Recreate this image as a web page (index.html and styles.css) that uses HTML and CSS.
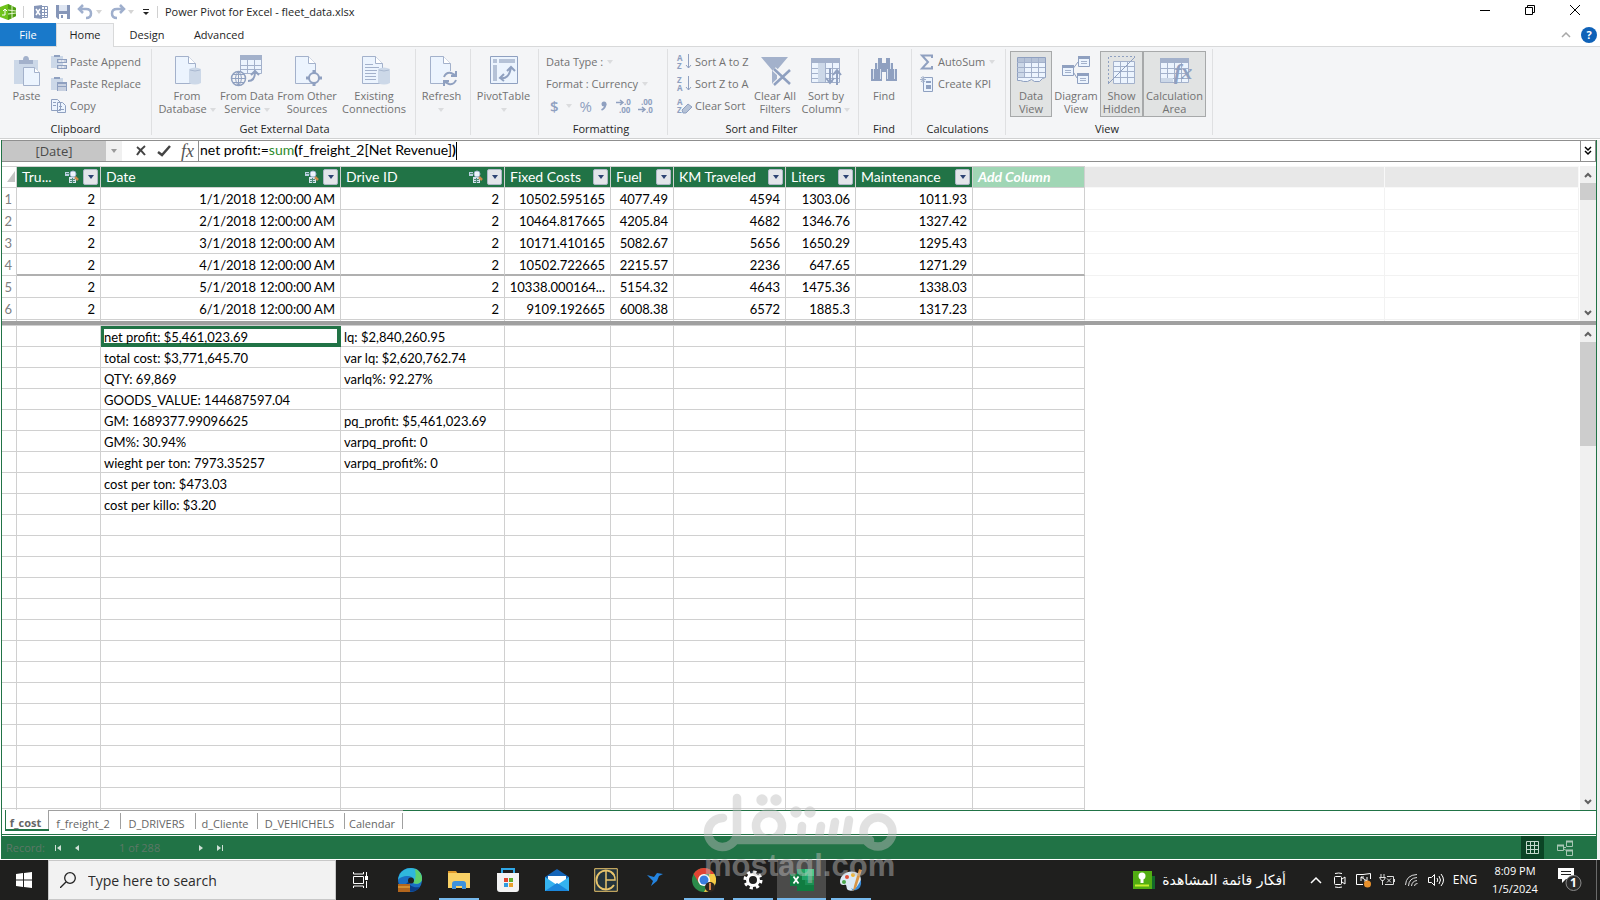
FILE: index.html
```html
<!DOCTYPE html>
<html lang="en">
<head>
<meta charset="utf-8">
<title>Power Pivot for Excel - fleet_data.xlsx</title>
<link rel="stylesheet" href="styles.css">
</head>
<body>
<svg class="defs" aria-hidden="true">
  <symbol id="down" viewBox="0 0 6 4"><path d="M0 0h6L3 4z" fill="currentColor"/></symbol>
  <symbol id="chev-up" viewBox="0 0 8 6"><path d="M1 5l3-3 3 3" fill="none" stroke="#606060" stroke-width="2"/></symbol>
  <symbol id="chev-down" viewBox="0 0 8 6"><path d="M1 1l3 3 3-3" fill="none" stroke="#606060" stroke-width="2"/></symbol>
  <symbol id="rel" viewBox="0 0 14 14"><path d="M0 2h4v4H0z" fill="#b9cfe0"/><path d="M4 7h7v6H4z" fill="#d5e2ee"/><path d="M5 9.500h5M5 11.500h5M7.500 8v5M1 3.500h3" stroke="#4f8a78"/><path d="M10 7l3 3" stroke="#c98a4b" stroke-width="2.500"/><circle cx="8" cy="4" r="3" fill="#eef4fb" stroke="#9fb3cc"/></symbol>
  <symbol id="page" viewBox="0 0 32 32"><path d="M4.500 1.500h13l7 7v20h-20z" fill="#ecf4fe" stroke="#a3b1cb"/><path d="M17.500 1.500v7h7" fill="#fff" stroke="#a3b1cb"/></symbol>
  <symbol id="table" viewBox="0 0 30 26"><path d="M.5.5h28v24H.5z" fill="#ecf4fe" stroke="#a3b1cb"/><path d="M0 0h29v5H0z" fill="#a3b1cb"/><path d="M0 10.500h29M0 15.500h29M0 20.500h29M7.500 5v20M14.500 5v20M21.500 5v20" stroke="#a3b1cb"/></symbol>
  <symbol id="cyl" viewBox="0 0 12 18"><path d="M0 2q6-3 12 0v14q-6 3-12 0z" fill="#ccd8e8"/><path d="M1 3q5 2 10 0" fill="none" stroke="#a9b8d0"/></symbol>
</svg>
<div class="app">
  <header class="titlebar">
    <svg class="logo" width="17" height="16" viewBox="0 0 17 16"><path d="M0 3l8-3 8 4v8l-8 4-8-3z" fill="#6fc31c"/><path d="M8 0l8 4v8l-8 4z" fill="#4f9f12"/><path d="M12 2v12M8 6l8 1M8 10l8-1" stroke="#e6f6cf"/><path d="M2 11h3V5M3 7l2-2 2 2" fill="none" stroke="#fff"/></svg>
    <i class="tsep"></i>
    <button class="qat" aria-label="Excel"><svg width="16" height="16" viewBox="0 0 16 16"><path d="M8.500 2.500h6v11h-6z" fill="#fff" stroke="#8696b8"/><path d="M9 5.500h5M9 8.500h5M9 11.500h5M11.500 3v10" stroke="#8696b8"/><path d="M1 2l8-1v14l-8-1z" fill="#8696b8"/><path d="M3 5l4 6M7 5l-4 6" stroke="#fff" stroke-width="1.500"/></svg></button>
    <button class="qat" aria-label="Save"><svg width="16" height="16" viewBox="0 0 16 16"><path d="M1 1h14v14H3l-2-2z" fill="#8696b8"/><path d="M4 1h8v6H4z" fill="#dfe6f2"/><path d="M4 10h8v5H4z" fill="#fff"/><path d="M6 11h2v3H6z" fill="#8696b8"/></svg></button>
    <button class="qat undo" aria-label="Undo"><svg width="16" height="16" viewBox="0 0 16 16"><path d="M6 1L2 5l4 4M2 5h7q5 0 5 4.500T9 14" fill="none" stroke="#9fafcd" stroke-width="2.500"/></svg></button>
    <svg class="tarrow" width="6" height="4"><use href="#down"/></svg>
    <button class="qat redo" aria-label="Redo"><svg width="16" height="16" viewBox="0 0 16 16"><path d="M10 1l4 4-4 4M14 5H7q-5 0-5 4.500T7 14" fill="none" stroke="#9fafcd" stroke-width="2.500"/></svg></button>
    <svg class="tarrow" width="6" height="4"><use href="#down"/></svg>
    <button class="qat custom" aria-label="Customize toolbar"><svg width="8" height="8" viewBox="0 0 8 8"><path d="M1 1.500h6" stroke="#222"/><path d="M1 4h6L4 7z" fill="#222"/></svg></button>
    <i class="tsep"></i>
    <h1>Power Pivot for Excel - fleet_data.xlsx</h1>
    <div class="winbtns">
      <button aria-label="Minimize"><svg width="12" height="12"><path d="M1 6.500h10" stroke="#000"/></svg></button>
      <button aria-label="Restore"><svg width="12" height="12"><path d="M1.500 3.500h7v7h-7zM3.500 3V1.500h7v7H9" fill="none" stroke="#000"/></svg></button>
      <button aria-label="Close"><svg width="12" height="12"><path d="M1 1l10 10M11 1L1 11" stroke="#000"/></svg></button>
    </div>
  </header>
  <nav class="tabs">
    <button class="file">File</button><button class="active">Home</button><button class="design">Design</button><button class="advanced">Advanced</button>
    <span class="help"><button aria-label="Collapse ribbon"><svg width="10" height="6"><path d="M1 5l4-4 4 4" fill="none" stroke="#a8a8a8" stroke-width="1.500"/></svg></button><button class="q" aria-label="Help">?</button></span>
  </nav>
  <section class="ribbon">
    <div class="group g-clip"><div class="body">
      <button class="big w-paste"><svg width="32" height="32" viewBox="0 0 32 32"><path d="M3 5h24v24H3z" fill="#ccd8e8"/><path d="M8 5h4q0-4 3-4t3 4h4v4H8z" fill="#a3b1cb"/><path d="M12.500 12.500h11l5 5v13h-16z" fill="#ecf4fe" stroke="#a3b1cb"/><path d="M23.500 12.500v5h5" fill="#fff" stroke="#a3b1cb"/></svg><span>Paste</span></button>
      <div class="col">
        <button class="small"><svg width="16" height="16" viewBox="0 0 16 16"><path d="M0 2h12v12H0z" fill="#ccd8e8"/><path d="M3 3V1h6v2zM6 5h10v4H6zM6 11h10v4H6z" fill="#8fa0c0"/><path d="M7 7h8M7 13h8M9 6v2M12 6v2M9 12v2M12 12v2" stroke="#fff"/></svg>Paste Append</button>
        <button class="small"><svg width="16" height="16" viewBox="0 0 16 16"><path d="M0 2h12v12H0z" fill="#ccd8e8"/><path d="M3 3V1h6v2zM6 6h10v9H6z" fill="#8fa0c0"/><path d="M7 9h8M7 12h8M7 14h8" stroke="#fff"/></svg>Paste Replace</button>
        <button class="small"><svg width="16" height="16" viewBox="0 0 16 16"><path d="M.5 1.500h6l3 3v8h-9zM6.500 4.500h5l3 3v7h-8z" fill="#ecf4fe" stroke="#8fa0c0"/><path d="M2 4.500h3M2 7.500h3M8 8.500h3M8 11.500h5" stroke="#8fa0c0"/></svg>Copy</button>
      </div></div><h2>Clipboard</h2></div>
    <div class="group g-ext"><div class="body">
      <button class="big w-db"><svg width="32" height="32"><use href="#page"/><use href="#cyl" x="18" y="12" width="12" height="18"/></svg><span>From<br>Database <svg class="arr" width="6" height="4"><use href="#down"/></svg></span></button>
      <button class="big w-svc"><svg width="32" height="32" viewBox="0 0 32 32"><path d="M9.500 1.500h21v17h-21z" fill="#ecf4fe" stroke="#a3b1cb"/><path d="M9 0h22v5H9z" fill="#a3b1cb"/><path d="M9 10.500h22M9 14.500h22M16.500 5v13M23.500 5v13" stroke="#a3b1cb"/><circle cx="7.500" cy="23.500" r="7" fill="#f4f5f7" stroke="#8fa0c0" stroke-width="1.500"/><path d="M.5 23.500h14M2 19.500h11M2 27.500h11M7.500 16v15M7.500 16q-6 7 0 15M7.500 16q6 7 0 15" fill="none" stroke="#8fa0c0"/><path d="M17 26q7 0 7-9M20 20l4-4 4 4" fill="none" stroke="#8fa0c0" stroke-width="2"/></svg><span>From Data<br>Service <svg class="arr" width="6" height="4"><use href="#down"/></svg></span></button>
      <button class="big w-oth"><svg width="32" height="32"><use href="#page"/><circle cx="23" cy="23" r="5" fill="#f4f5f7" stroke="#8fa0c0" stroke-width="2"/><path d="M23 15v4M23 27v4M15 23h4M27 23h4" stroke="#8fa0c0" stroke-width="3"/></svg><span>From Other<br>Sources</span></button>
      <button class="big w-con"><svg width="32" height="32"><use href="#page"/><path d="M7 9.500h8M7 12.500h14M7 15.500h12M7 18.500h11M7 21.500h11M7 24.500h11" stroke="#a3b1cb"/><use href="#cyl" x="20" y="12" width="12" height="18"/></svg><span>Existing<br>Connections</span></button>
      </div><h2>Get External Data</h2></div>
    <div class="group g-ref"><div class="body">
      <button class="big"><svg width="32" height="32"><use href="#page"/><circle cx="24" cy="24" r="8" fill="#f4f5f7"/><path d="M18 22q2-5 7-4l4 2M30 16v5h-5M30 25q-2 5-7 4l-4-2M18 31v-5h5" fill="none" stroke="#8fa0c0" stroke-width="2"/></svg><span>Refresh<br><svg class="arr" width="6" height="4"><use href="#down"/></svg></span></button>
      </div><h2></h2></div>
    <div class="group g-piv"><div class="body">
      <button class="big"><svg width="32" height="32" viewBox="0 0 32 32"><path d="M2.500 1.500h27v27h-27z" fill="#ecf4fe" stroke="#8fa0c0"/><path d="M5 4h4v4H5zM11 4h16v4H11zM5 10h4v16H5z" fill="#b5c2d7"/><path d="M12 23q9 2 11-11M19 16l4-4 4 4M16 19l-4 4 4 3" fill="none" stroke="#8fa0c0" stroke-width="2"/></svg><span>PivotTable<br><svg class="arr" width="6" height="4"><use href="#down"/></svg></span></button>
      </div><h2></h2></div>
    <div class="group g-fmt"><div class="body"><div class="col">
        <button class="small">Data Type : <svg class="arr" width="6" height="4"><use href="#down"/></svg></button>
        <button class="small">Format : Currency <svg class="arr" width="6" height="4"><use href="#down"/></svg></button>
        <div class="fmt">
          <button aria-label="Currency"><b class="cur">$</b><svg class="arr" width="6" height="4"><use href="#down"/></svg></button>
          <button><b>%</b></button>
          <button aria-label="Comma style"><svg width="8" height="12" viewBox="0 0 8 12"><circle cx="4" cy="4" r="2.500" fill="#8fa0c0"/><path d="M5.500 4q0 4-4 6" fill="none" stroke="#8fa0c0" stroke-width="1.800"/></svg></button>
          <button class="dec" aria-label="Increase decimal"><svg width="18" height="18" viewBox="0 0 18 18"><path d="M0 5.500h6M4 3l3 2.500L4 8" fill="none" stroke="#8fa0c0" stroke-width="1.500"/><text x="8" y="8">.0</text><text x="3" y="16">.00</text></svg></button>
          <button class="dec" aria-label="Decrease decimal"><svg width="18" height="18" viewBox="0 0 18 18"><path d="M0 12.500h6M4 10l3 2.500L4 15" fill="none" stroke="#8fa0c0" stroke-width="1.500"/><text x="3" y="8">.00</text><text x="8" y="16">.0</text></svg></button>
        </div></div></div><h2>Formatting</h2></div>
    <div class="group g-sort"><div class="body">
      <div class="col">
        <button class="small"><svg width="16" height="20" viewBox="0 0 16 20"><text x="0" y="9">A</text><text x="0" y="17">Z</text><path d="M11.500 2v14M9 13l2.500 3 2.500-3" fill="none" stroke="#8fa0c0"/></svg>Sort A to Z</button>
        <button class="small"><svg width="16" height="20" viewBox="0 0 16 20"><text x="0" y="9">Z</text><text x="0" y="17">A</text><path d="M11.500 2v14M9 13l2.500 3 2.500-3" fill="none" stroke="#8fa0c0"/></svg>Sort Z to A</button>
        <button class="small"><svg width="16" height="20" viewBox="0 0 16 20"><text x="0" y="9">A</text><text x="0" y="17">Z</text><path d="M5 14l6-6 4 3-6 6H6z" fill="#b5c2d7" stroke="#8fa0c0"/></svg>Clear Sort</button>
      </div>
      <button class="big w-clr"><svg width="32" height="32" viewBox="0 0 32 32"><path d="M2 2h27L18 15v10l-5 4V15z" fill="#a3b1cb"/><path d="M15 14l16 15M31 15L15 30" stroke="#f4f5f7" stroke-width="5"/><path d="M15 14l16 15M31 15L15 30" stroke="#8fa0c0" stroke-width="2.500"/></svg><span>Clear All<br>Filters</span></button>
      <button class="big w-sby"><svg width="32" height="32" viewBox="0 0 32 32"><use href="#table" x="1" y="3" width="30" height="26"/><path d="M8 8h7v19H8z" fill="#ccd8e8"/><path d="M20 13v15M16 23l4 5 4-5M27 30V15M23 20l4-5 4 5" fill="none" stroke="#8fa0c0" stroke-width="2"/></svg><span>Sort by<br>Column <svg class="arr" width="6" height="4"><use href="#down"/></svg></span></button>
      </div><h2>Sort and Filter</h2></div>
    <div class="group g-find"><div class="body">
      <button class="big"><svg width="32" height="32" viewBox="0 0 32 32"><path d="M10 3h4v5h4V3h4v5h3v6h4v12H18v-9h-4v9H3V14h4V8h3z" fill="#8fa0c0"/><path d="M5.500 14v10M26.500 14v10M9.500 8v6M22.500 8v6M12.500 14v10M19.500 14v10" stroke="#d9e2ef"/></svg><span>Find</span></button>
      </div><h2>Find</h2></div>
    <div class="group g-calc"><div class="body"><div class="col">
        <button class="small"><svg width="14" height="16" viewBox="0 0 14 16"><path d="M12 4V1.500H2L8 8l-6 6.500h10V12" fill="none" stroke="#8fa0c0" stroke-width="2"/></svg>AutoSum <svg class="arr" width="6" height="4"><use href="#down"/></svg></button>
        <button class="small"><svg width="14" height="16" viewBox="0 0 14 16"><path d="M3.500 1.500h9v14h-9z" fill="#ecf4fe" stroke="#8fa0c0"/><path d="M6 5h5v2H6zM6 9h5v4H6z" fill="#8fa0c0"/><path d="M3 0v7M0 3.500h6M1 1l4 5M5 1L1 6" stroke="#a3b1cb"/></svg>Create KPI</button>
      </div></div><h2>Calculations</h2></div>
    <div class="group g-view"><div class="body">
      <button class="big on w-data"><svg width="32" height="32" viewBox="0 0 32 32"><path d="M2.500 2.500h28v20l-3 1-3 3h-5l-3-2-4 2h-4l-3-1h-3z" fill="#ecf4fe" stroke="#8fa0c0"/><path d="M3 3h27v4H3z" fill="#b5c2d7"/><path d="M3 7h6v15H3z" fill="#ccd8e8"/><path d="M2 7.500h28M2 12.500h28M2 17.500h28M2 22.500h28M9.500 3v20M16.500 3v20M23.500 3v20" stroke="#a3b1cb"/></svg><span>Data<br>View</span></button>
      <button class="big w-dia"><svg width="32" height="32" viewBox="0 0 32 32"><path d="M12 15l6-8M12 15l5 8" stroke="#8fa0c0"/><path d="M18.500 1.500h11v10h-11zM2.500 10.500h11v10h-11zM17.500 18.500h11v10h-11z" fill="#ecf4fe" stroke="#8fa0c0"/><path d="M18 1h12v3H18zM2 10h12v3H2zM17 18h12v3H17z" fill="#8fa0c0"/><path d="M21 6.500h6M21 8.500h6M5 15.500h6M5 17.500h6M20 23.500h6M20 25.500h6" stroke="#a3b1cb"/></svg><span>Diagram<br>View</span></button>
      <button class="big on w-show"><svg width="32" height="32" viewBox="0 0 32 32"><path d="M7.500 6.500h21v22h-21z" fill="#ecf4fe" stroke="#a3b1cb"/><path d="M7 11.500h21M7 16.500h21M7 22.500h21M14.500 6v22M21.500 6v22" stroke="#a3b1cb"/><path d="M2.500 28V1.500H29" fill="none" stroke="#8fa0c0" stroke-dasharray="2 2"/><path d="M2 29L29 2" stroke="#8fa0c0"/></svg><span>Show<br>Hidden</span></button>
      <button class="big on w-area"><svg width="32" height="32"><use href="#table" x="1" y="3" width="30" height="26"/><path d="M2 23h12v4H2z" fill="#ccd8e8"/><text class="fxi" x="15" y="24">fx</text></svg><span>Calculation<br>Area</span></button>
      </div><h2>View</h2></div>
  </section>
  <main class="frame">
    <div class="formula">
      <select aria-label="Name box"><option>[Date]</option></select>
      <span class="drop"><svg width="6" height="4"><use href="#down"/></svg></span>
      <div class="fbtns">
        <button aria-label="Cancel"><svg width="12" height="12"><path d="M2 2q4 3 8 8M10 1Q5 5 2 10" fill="none" stroke="#444" stroke-width="2"/></svg></button>
        <button aria-label="Enter"><svg width="14" height="12"><path d="M1 7l4 3 8-9" fill="none" stroke="#444" stroke-width="2.500"/></svg></button>
        <button class="fx" aria-label="Insert function">fx</button>
      </div>
      <div class="finput" role="textbox" contenteditable="true" spellcheck="false" aria-label="Formula">net profit:=<span class="fn">sum</span><b>(</b>f_freight_2[Net Revenue]<b>)</b><i class="caret"></i></div>
      <button class="expand" aria-label="Expand formula bar"><svg width="8" height="10"><path d="M1 1l3 3 3-3M1 5l3 3 3-3" fill="none" stroke="#000" stroke-width="1.500"/></svg></button>
    </div>
    <div class="pane data">
      <div class="view">
      <table>
        <colgroup><col class="c0"><col class="c1"><col class="c2"><col class="c3"><col class="c4"><col class="c5"><col class="c6"><col class="c7"><col class="c8"><col class="c9"><col class="c10"><col></colgroup>
        <thead><tr>
          <th class="corner"><svg width="9" height="12"><path d="M8 0v11H0z" fill="#c4c4c4"/></svg></th>
          <th><div><span>Tru...</span><svg width="14" height="14"><use href="#rel"/></svg><button aria-label="Filter"><svg width="6" height="4"><use href="#down"/></svg></button></div></th>
          <th><div><span>Date</span><svg width="14" height="14"><use href="#rel"/></svg><button aria-label="Filter"><svg width="6" height="4"><use href="#down"/></svg></button></div></th>
          <th><div><span>Drive ID</span><svg width="14" height="14"><use href="#rel"/></svg><button aria-label="Filter"><svg width="6" height="4"><use href="#down"/></svg></button></div></th>
          <th><div><span>Fixed Costs</span><button aria-label="Filter"><svg width="6" height="4"><use href="#down"/></svg></button></div></th>
          <th><div><span>Fuel</span><button aria-label="Filter"><svg width="6" height="4"><use href="#down"/></svg></button></div></th>
          <th><div><span>KM Traveled</span><button aria-label="Filter"><svg width="6" height="4"><use href="#down"/></svg></button></div></th>
          <th><div><span>Liters</span><button aria-label="Filter"><svg width="6" height="4"><use href="#down"/></svg></button></div></th>
          <th><div><span>Maintenance</span><button aria-label="Filter"><svg width="6" height="4"><use href="#down"/></svg></button></div></th>
          <th class="add"><div><span>Add Column</span></div></th>
          <th class="fill"></th><th class="fill"></th>
        </tr></thead>
        <tbody>
          <tr><td class="n">1<td>2<td>1/1/2018 12:00:00 AM<td>2<td>10502.595165<td>4077.49<td>4594<td>1303.06<td>1011.93<td><td class="f"><td class="f"></tr>
          <tr><td class="n">2<td>2<td>2/1/2018 12:00:00 AM<td>2<td>10464.817665<td>4205.84<td>4682<td>1346.76<td>1327.42<td><td class="f"><td class="f"></tr>
          <tr><td class="n">3<td>2<td>3/1/2018 12:00:00 AM<td>2<td>10171.410165<td>5082.67<td>5656<td>1650.29<td>1295.43<td><td class="f"><td class="f"></tr>
          <tr class="mark"><td class="n">4<td>2<td>4/1/2018 12:00:00 AM<td>2<td>10502.722665<td>2215.57<td>2236<td>647.65<td>1271.29<td><td class="f"><td class="f"></tr>
          <tr><td class="n">5<td>2<td>5/1/2018 12:00:00 AM<td>2<td>10338.000164...<td>5154.32<td>4643<td>1475.36<td>1338.03<td><td class="f"><td class="f"></tr>
          <tr><td class="n">6<td>2<td>6/1/2018 12:00:00 AM<td>2<td>9109.192665<td>6008.38<td>6572<td>1885.3<td>1317.23<td><td class="f"><td class="f"></tr>
          <tr><td class="n"><td><td><td><td><td><td><td><td><td class="f"><td class="f"></tr>
        </tbody>
      </table>
      </div>
      <div class="scroll"><svg width="8" height="6"><use href="#chev-up"/></svg><i class="thumb t1"></i><svg class="end" width="8" height="6"><use href="#chev-down"/></svg></div>
    </div>
    <div class="splitter"></div>
    <div class="pane calc">
      <div class="view">
      <table>
        <colgroup><col class="c0"><col class="c1"><col class="c2"><col class="c3"><col class="c4"><col class="c5"><col class="c6"><col class="c7"><col class="c8"><col class="c9"></colgroup>
        <tbody>
          <tr><td><td><td class="sel">net profit: $5,461,023.69<td>lq: $2,840,260.95<td><td><td><td><td><td></tr>
          <tr><td><td><td>total cost: $3,771,645.70<td>var lq: $2,620,762.74<td><td><td><td><td><td></tr>
          <tr><td><td><td>QTY: 69,869<td>varlq%: 92.27%<td><td><td><td><td><td></tr>
          <tr><td><td><td>GOODS_VALUE: 144687597.04<td><td><td><td><td><td><td></tr>
          <tr><td><td><td>GM: 1689377.99096625<td>pq_profit: $5,461,023.69<td><td><td><td><td><td></tr>
          <tr><td><td><td>GM%: 30.94%<td>varpq_profit: 0<td><td><td><td><td><td></tr>
          <tr><td><td><td>wieght per ton: 7973.35257<td>varpq_profit%: 0<td><td><td><td><td><td></tr>
          <tr><td><td><td>cost per ton: $473.03<td><td><td><td><td><td><td></tr>
          <tr><td><td><td>cost per killo: $3.20<td><td><td><td><td><td><td></tr>
          <tr><td><td><td><td><td><td><td><td><td><td></tr>
          <tr><td><td><td><td><td><td><td><td><td><td></tr>
          <tr><td><td><td><td><td><td><td><td><td><td></tr>
          <tr><td><td><td><td><td><td><td><td><td><td></tr>
          <tr><td><td><td><td><td><td><td><td><td><td></tr>
          <tr><td><td><td><td><td><td><td><td><td><td></tr>
          <tr><td><td><td><td><td><td><td><td><td><td></tr>
          <tr><td><td><td><td><td><td><td><td><td><td></tr>
          <tr><td><td><td><td><td><td><td><td><td><td></tr>
          <tr><td><td><td><td><td><td><td><td><td><td></tr>
          <tr><td><td><td><td><td><td><td><td><td><td></tr>
          <tr><td><td><td><td><td><td><td><td><td><td></tr>
          <tr><td><td><td><td><td><td><td><td><td><td></tr>
          <tr><td><td><td><td><td><td><td><td><td><td></tr>
          <tr><td><td><td><td><td><td><td><td><td><td></tr>
        </tbody>
      </table>
      </div>
      <div class="scroll"><svg width="8" height="6"><use href="#chev-up"/></svg><i class="thumb t2"></i><svg class="end" width="8" height="6"><use href="#chev-down"/></svg></div>
    </div>
    <div class="sheets">
      <button class="cur">f_cost</button><button class="s2">f_freight_2</button><button class="s3">D_DRIVERS</button><button class="s4">d_Cliente</button><button class="s5">D_VEHICHELS</button><button class="s6">Calendar</button><span class="rest"></span>
    </div>
    <footer class="status">
      <span class="rec">Record:</span>
      <button aria-label="First"><svg width="6" height="6"><path d="M.5 0v6" stroke="#cfe0d6"/><path d="M6 0v6L2 3z" fill="#cfe0d6"/></svg></button>
      <button aria-label="Previous"><svg width="4" height="6"><path d="M4 0v6L0 3z" fill="#cfe0d6"/></svg></button>
      <span class="count">1 of 288</span>
      <button aria-label="Next"><svg width="4" height="6"><path d="M0 0v6l4-3z" fill="#cfe0d6"/></svg></button>
      <button aria-label="Last"><svg width="6" height="6"><path d="M5.500 0v6" stroke="#cfe0d6"/><path d="M0 0v6l4-3z" fill="#cfe0d6"/></svg></button>
      <span class="views">
        <button class="on" aria-label="Grid"><svg width="13" height="13"><path d="M.5.5h12v12H.5zM.5 4.500h12M.5 8.500h12M4.500.5v12M8.500.5v12" fill="none" stroke="#c3d8cb"/></svg></button>
        <button aria-label="Diagram"><svg width="17" height="16"><path d="M.5 5.500h6v5h-6zM9.500 1.500h6v5h-6zM9.500 10.500h6v5h-6zM7 7.500h2M7 9l3 2" fill="none" stroke="#a9c7b5"/><path d="M0 5.500h7M9 1.500h7M9 10.500h7" stroke="#a9c7b5" stroke-width="2"/></svg></button>
      </span>
    </footer>
  </main>
  <div class="taskbar">
    <button class="start" aria-label="Start"><svg width="16" height="16"><path d="M0 2l7-1v6.500H0zM8 1l8-1v7.500H8zM0 8.500h7V15l-7-1zM8 8.500h8V16l-8-1z" fill="#fff"/></svg></button>
    <label class="search"><svg width="16" height="16"><circle cx="10" cy="6" r="5.300" fill="none" stroke="#222" stroke-width="1.300"/><path d="M6 10l-6 6" stroke="#222" stroke-width="1.300"/></svg><input type="text" placeholder="Type here to search" aria-label="Search"></label>
    <button class="tb" aria-label="Task view"><svg width="18" height="16"><path d="M1.500 4.500h10v7h-10zM1.500 0v2h10V0M1.500 16v-2h10v2M14.500 0v4M14.500 9v7" fill="none" stroke="#fff"/><path d="M13 4h3v4h-3z" fill="#fff"/></svg></button>
    <button class="tb" aria-label="Edge"><svg width="24" height="24"><circle cx="12" cy="12" r="12" fill="#1a6fc4"/><path d="M0 12C1 3 8 0 13 0c7 0 11 5 11 10 0 5-5 7-9 5 2-3 0-7-5-7C5 8 1 10 0 12z" fill="#2fb7dc"/><path d="M17 1c5 2 7 6 7 10 0 4-5 6-9 4 3-4 3-8 2-14z" fill="#5fd06b"/><path d="M11 13c0 5 4 7 11 6-4 6-14 6-17 0z" fill="#0c3f8a"/><circle cx="13" cy="12.500" r="3" fill="#202020"/><path d="M0 16h12v8H0z" fill="#b3661d"/><path d="M0 19h12" stroke="#f0b544"/></svg></button>
    <button class="tb run" aria-label="File Explorer"><svg width="22" height="18"><path d="M0 0h8l2 3H0z" fill="#e09a2c"/><path d="M0 2h22v15H0z" fill="#f9d166"/><path d="M4 18v-5q0-3 3-3h8q3 0 3 3v5h-4v-3H8v3z" fill="#3e92dc"/></svg></button>
    <button class="tb" aria-label="Store"><svg width="24" height="24"><path d="M6 6V1h12v5" fill="none" stroke="#2fa8e8" stroke-width="2"/><path d="M1 5h22v16q0 3-3 3H4q-3 0-3-3z" fill="#f3f3f3"/><path d="M8 10h4v4H8z" fill="#e2452f"/><path d="M13 10h4v4h-4z" fill="#5fae2e"/><path d="M8 15h4v4H8z" fill="#2f9be0"/><path d="M13 15h4v4h-4z" fill="#e8a02c"/></svg></button>
    <button class="tb" aria-label="Mail"><svg width="24" height="24"><path d="M0 9l12-8 12 8v14H0z" fill="#1565b8"/><path d="M3 8h18v8H3z" fill="#fff"/><path d="M0 9l12 8 12-8v14H0z" fill="#35b3f0"/><path d="M0 23l12-8 12 8z" fill="#1b87dc"/></svg></button>
    <button class="tb" aria-label="Editor"><svg width="24" height="24" fill="none" stroke="#e8c46c"><path d="M.7.7h22.600v22.600H.7z" fill="#24343c"/><path d="M20 17a9.500 9.500 0 1 1 0-10" stroke-width="1.800"/><path d="M12 2v20M12 12h9q0-6-4-8" stroke-width="1.500"/></svg></button>
    <button class="tb" aria-label="Bird"><svg width="16" height="14"><path d="M0 2l7 2 3-4 6 1-4 2-2 5-6 5 2-5z" fill="#2484e0"/></svg></button>
    <button class="tb run" aria-label="Chrome"><svg width="24" height="24"><circle cx="12" cy="12" r="12" fill="#2b8a4a"/><path d="M1.600 6A12 12 0 0 1 22.400 6H12z" fill="#e04433"/><path d="M1.600 6L7 15l5-9z" fill="#e04433"/><path d="M22.400 6A12 12 0 0 1 12 24l5-9V6z" fill="#f7cb45"/><circle cx="12" cy="12" r="6" fill="#fff"/><circle cx="12" cy="12" r="4.500" fill="#3a7de0"/><circle cx="18" cy="19" r="5" fill="#30261f"/><path d="M18 15v7" stroke="#d6804a" stroke-width="2"/></svg></button>
    <button class="tb run" aria-label="Settings"><svg width="20" height="20"><circle cx="10" cy="10" r="5.500" fill="none" stroke="#fff" stroke-width="3"/><circle cx="10" cy="10" r="8" fill="none" stroke="#fff" stroke-width="3" stroke-dasharray="3.200 3.080"/></svg></button>
    <button class="tb run act" aria-label="Excel"><svg width="24" height="22"><path d="M7 0h17v22H7z" fill="#21a366"/><path d="M15 0h9v7h-9z" fill="#46c98a"/><path d="M7 11h17v11H7z" fill="#107c41"/><path d="M15 11h9v5h-9z" fill="#1b8f53"/><path d="M0 5h12v12H0z" fill="#107c41"/><path d="M3.500 7.500l5 7M8.500 7.500l-5 7" stroke="#fff" stroke-width="1.800"/></svg></button>
    <button class="tb run" aria-label="Paint"><svg width="24" height="24"><path d="M1 13C2 6 9 2 16 4c7 2 7 9 4 14-3 5-10 6-12 3-1-3 0-5-3-4-3 0-4-1-4-4z" fill="#dceaf6"/><circle cx="8" cy="9" r="2" fill="#e0503c"/><circle cx="14" cy="7" r="2" fill="#f0b52e"/><circle cx="5" cy="14" r="2" fill="#4aa84c"/><path d="M12 20q3 3 7-3l3-5q1 8-5 10-4 1-5-2z" fill="#3a8bd8"/><path d="M20 1l3 1-6 18-3 3 1-5z" fill="#d99545"/></svg></button>
    <div class="tray">
      <button class="news"><svg width="22" height="18"><path d="M18 5h4v13h-4z" fill="#136b2a"/><path d="M0 0h19v18H0z" fill="#52ad13"/><path d="M2 14.500h14" stroke="#c9ef2e" stroke-width="2"/><circle cx="9" cy="5" r="3.500" fill="#fff"/><path d="M7.500 8h3v4h-3z" fill="#fff"/></svg><span lang="ar" dir="rtl">أفكار قائمة المشاهدة</span></button>
      <button class="ti up" aria-label="Show hidden icons"><svg width="12" height="8"><path d="M1 7l5-5 5 5" fill="none" stroke="#fff" stroke-width="1.500"/></svg></button>
      <button class="ti" aria-label="Meet now"><svg width="14" height="16" fill="none" stroke="#fff"><rect x="1.500" y="4.500" width="7" height="8" rx="1"/><path d="M9 7l3-2v7l-3-2M2 1.500q4-1 7 0M2 15q4 1 7 0"/></svg></button>
      <button class="ti" aria-label="Sync"><svg width="18" height="16" fill="none" stroke="#fff"><path d="M15.500 7V1.500L8 2.500h-6.500v10H8M6 9V5h3M12 5v4H9M6 5l6 4"/><circle cx="12.500" cy="12" r="3.500" fill="#e8912d" stroke="none"/></svg></button>
      <button class="ti" aria-label="Battery"><svg width="18" height="14" fill="none" stroke="#ddd"><path d="M2 1v3M5 1v3M.5 4.500h6l-2 3h-2zM3.500 8v4M8 3.500h6.500v8H6M15.500 6v3M8 5.500l4 4M12 5.500l-4 4"/></svg></button>
      <button class="ti" aria-label="Network"><svg width="16" height="16" fill="none" stroke="#ddd"><path d="M1.500 13Q2 3 13 2.500M4.500 14Q5 6 13 5.500M7.500 14q.5-5 5.500-5.500M10.500 14q0-2.500 3-2.500"/></svg></button>
      <button class="ti" aria-label="Volume"><svg width="18" height="14" fill="none" stroke="#fff"><path d="M1.500 4.500h3l3-3v11l-3-3h-3zM10 5q1.500 2 0 4M12 3q3 4 0 8M14 1q5 6 0 12"/></svg></button>
      <button class="lang">ENG</button>
      <button class="clock">8:09 PM<br>1/5/2024</button>
      <button class="note" aria-label="Notifications"><svg width="24" height="26"><path d="M0 1h16v11H8l-4 4v-4H0z" fill="#fff"/><path d="M3 4.500h10M3 7.500h10" stroke="#222"/><circle cx="15.500" cy="16" r="7.500" fill="#2a2a2a" stroke="#8b8b8b"/><text x="12" y="20">1</text></svg></button>
    </div>
  </div>
</div>
<svg class="watermark" width="196" height="92" viewBox="0 0 196 92" aria-hidden="true">
  <g fill="none" stroke="#bebebe" stroke-width="8.500" stroke-linecap="round" stroke-linejoin="round">
    <path d="M21 26A14.500 14.500 0 1 0 35 41V6M35 48H168"/>
    <circle cx="67" cy="34" r="13"/><circle cx="176" cy="40" r="14.500"/>
    <path d="M100 34l-1 12M119 34l-2 12M133 30l-3 16M147 28l-3 18"/>
  </g>
  <g fill="#bebebe"><circle cx="60" cy="8" r="5.700"/><circle cx="74" cy="8" r="5.700"/><circle cx="94" cy="20" r="5.700"/><circle cx="108" cy="20" r="5.700"/><text x="2" y="84">mostaql.com</text></g>
</svg>
</body>
</html>
```
FILE: styles.css
```css
* { box-sizing: border-box; }
html, body { margin: 0; height: 100%; }
body { font: 11px/14px "Open Sans", "Noto Sans", sans-serif; color: #1e1e1e; background: #fff; overflow: hidden; position: relative; }
button, input, select { font: inherit; color: inherit; background: none; border: 0; padding: 0; margin: 0; border-radius: 0; }
h1, h2 { font: inherit; margin: 0; }
svg { display: block; flex: none; }
.defs { display: none; }
.app { display: flex; flex-direction: column; height: 100vh; }

.titlebar { display: flex; align-items: center; height: 23px; flex: none; }
.tsep { width: 1px; height: 12px; background: #d0d0d0; margin: 0 7px 0 6px; }
.titlebar > .logo + .tsep { margin-right: 9px; }
.qat { width: 16px; margin-right: 6px; }
.qat.undo { margin-right: 3px; }
.qat + .tarrow { margin-right: 8px; }
.tarrow { color: #d5d5d5; }
.qat.redo { margin-right: 2px; }
.qat.custom { width: 8px; margin-right: 1px; }
.titlebar h1 { flex: 1; }
.winbtns { display: flex; align-self: flex-start; height: 20px; align-items: center; margin-right: 19px; gap: 33px; }

.tabs { display: flex; height: 24px; flex: none; margin-bottom: -1px; position: relative; }
.tabs > button { height: 24px; }
.tabs .file { width: 56px; height: 23px; background: #1979ca; color: #fff; }
.tabs .active { width: 58px; background: #f4f5f7; border: 1px solid #d8d9da; border-bottom: 0; padding-bottom: 2px; }
.tabs .design { width: 66px; }
.tabs .advanced { width: 78px; }
.help { margin-left: auto; display: flex; align-items: center; gap: 10px; padding-right: 3px; }
.help .q { width: 16px; height: 16px; border-radius: 8px; background: #0f62b8; color: #fff; font-weight: 700; line-height: 16px; }

.ribbon { display: flex; flex: none; height: 93px; padding-top: 2px; background: #f4f5f7; border-top: 1px solid #d8d9da; border-bottom: 1px solid #d0d1d2; color: #727272; }
.group { display: flex; flex-direction: column; height: 86px; border-right: 1px solid #dfe0e2; }
.group .body { display: flex; height: 71px; padding-top: 2px; }
.group h2 { text-align: center; color: #262626; height: 15px; line-height: 17px; }
.big { display: flex; flex-direction: column; align-items: center; gap: 2px; height: 66px; padding-top: 3px; border: 1px solid transparent; line-height: 13px; text-align: center; width: 100%; white-space: nowrap; }
.big.on { background: #e1e3e3; border-color: #a7a9aa; }
.big span { display: block; }
.arr { display: inline-block; vertical-align: middle; color: #dbdcde; }
.col { display: flex; flex-direction: column; }
.small { display: flex; align-items: center; gap: 4px; height: 22px; white-space: nowrap; }
.g-clip { width: 152px; } .w-paste { width: 51px; padding-left: 2px; }
.g-clip .small { gap: 3px; }
.g-ext { width: 264px; padding: 0 2px 0 4px; } .w-db, .w-oth { width: 62px; } .w-svc { width: 58px; } .w-con { width: 72px; }
.g-ref { width: 55px; padding-right: 3px; } .g-piv { width: 68px; padding-right: 2px; }
.g-fmt { width: 129px; } .g-fmt .col { padding-left: 7px; } .g-fmt h2 { padding-right: 4px; }
.g-sort { width: 191px; } .g-sort .col { padding-left: 9px; width: 82px; } .g-sort .small { gap: 2px; } .g-sort h2 { padding-right: 3px; }
.w-clr { width: 50px; } .w-sby { width: 52px; }
.g-find { width: 53px; padding-right: 2px; } .g-calc { width: 94px; } .g-calc .col { padding-left: 8px; } .g-calc h2 { padding-right: 2px; }
.g-view { width: 207px; padding-left: 4px; } .g-view h2 { padding-right: 8px; }
.w-data { width: 42px; } .w-dia { width: 48px; } .w-show { width: 43px; } .w-area { width: 63px; }
.fmt { display: flex; align-items: center; height: 22px; gap: 8px; padding-left: 4px; }
.fmt button { display: flex; align-items: center; gap: 4px; }
.fmt .dec + .dec { margin-left: -4px; }
.fmt b { font: 15px/22px "Open Sans", sans-serif; color: #8fa0c0; }
.fmt b.cur { font-weight: 600; } .fmt .cur + .arr { margin-left: 3px; }
.ribbon text { font: 700 8px "Open Sans", sans-serif; fill: #8fa0c0; }
.ribbon svg { overflow: visible; }
.ribbon text.fxi { font: italic 700 22px "Liberation Serif", serif; }

.frame { flex: 1; min-height: 0; display: flex; flex-direction: column; margin: 1px 3px 1px 1px; border: solid #217346; border-width: 0 1px; box-shadow: 3px 0 #f0f0f0; font-family: Lato, Carlito, sans-serif; font-size: 13px; color: #000; }
.formula { display: flex; height: 22px; flex: none; border: solid #8f8f8f; border-width: 1px 0; margin-bottom: 4px; }
.formula select { appearance: none; width: 104px; background: #c6c6c6; text-align: center; text-align-last: center; font: 13px/18px "Open Sans", sans-serif; color: #4a4a4a; }
.drop { width: 16px; background: #f0f0f0; color: #9a9a9a; display: flex; align-items: center; justify-content: center; }
.fbtns { width: 76px; display: flex; align-items: center; gap: 10px; padding-left: 13px; }
.fx { font: italic 18px/18px "Liberation Serif", serif; color: #555; }
.finput { flex: 1; border-left: 1px solid #8f8f8f; padding-left: 1px; line-height: 18px; font-size: 14px; white-space: pre; outline: 0; }
.finput .fn { color: #2b8a2b; }
.caret { display: inline-block; width: 1px; height: 18px; background: #000; vertical-align: middle; }
.expand { width: 16px; border: solid #8f8f8f; border-width: 0 1px; display: flex; align-items: center; justify-content: center; }

.pane { display: flex; }
.view { flex: 1; min-width: 0; overflow: hidden; }
.data { height: 155px; flex: none; }
.calc { flex: 1; min-height: 0; }
table { table-layout: fixed; border-collapse: separate; border-spacing: 0; }
.data table { width: calc(100% - 1px); }
.calc table { width: 1083px; border-top: 1px solid #d0d0d0; }
.c0 { width: 15px; } .c1 { width: 84px; } .c2 { width: 240px; } .c3 { width: 164px; } .c4 { width: 106px; } .c5 { width: 63px; } .c6, .c9 { width: 112px; } .c7 { width: 70px; } .c8 { width: 117px; } .c10 { width: 300px; }
td, th { padding: 0; border: solid #d0d0d0; border-width: 0 1px 1px 0; white-space: nowrap; overflow: hidden; font-weight: 400; }
.data td { height: 22px; padding: 2px 5px 0 0; text-align: right; line-height: 18px; vertical-align: top; }
.data td.n { padding-right: 4px; color: #808080; }
.data td.f { border-color: #f2f2f2; }
.data .mark td:not(.n, .f) { border-bottom: 2px solid #b0b0b0; }
th { height: 22px; border-top: 1px solid #d0d0d0; background: #217346; color: #fff; text-align: left; font-size: 14px; line-height: 20px; }
th.corner { background: #fff; } th.corner svg { margin-left: 5px; }
th.add { background: #a0d6b5; font-weight: 700; font-style: italic; }
th.fill { background: #e8e8e8; border-color: #f8f8f8; }
th div { display: flex; align-items: center; gap: 4px; height: 20px; padding: 0 2px 0 5px; }
th span { flex: 1; }
th button { width: 15px; height: 16px; background: #e3e5ea; border: 1px solid #aeb6c6; border-radius: 2px; color: #2d4374; display: flex; align-items: center; justify-content: center; }
.calc td { height: 21px; padding: 2px 0 0 3px; line-height: 18px; }
.calc td.sel { box-shadow: inset 0 0 0 3px #217346; border-color: #217346; }
.splitter { height: 4px; flex: none; background: #a0a0a0; }
.scroll { width: 16px; flex: none; background: #f0f0f0; display: flex; flex-direction: column; align-items: center; padding: 6px 0 5px; }
.thumb { width: 16px; background: #cdcdcd; margin-top: 5px; }
.t1 { height: 17px; } .t2 { height: 104px; }
.end { margin-top: auto; }

.sheets { display: flex; flex: none; height: 25px; border-bottom: 1px solid #217346; font: 11px/14px "Open Sans", sans-serif; color: #666; }
.sheets button { border-top: 1px solid #a0a0a0; padding: 3px 4px 0 0; background: linear-gradient(#a0a0a0, #a0a0a0) right 2px / 1px 16px no-repeat; }
.sheets .cur { width: 44px; margin-left: 3px; height: 21px; font-weight: 700; border: solid #217346; border-width: 0 0 2px 1px; padding-top: 6px; background-position: right 0; background-size: 1px 21px; }
.s2 { width: 72px; } .s3 { width: 75px; } .s4 { width: 62px; } .s5 { width: 87px; } .s6 { width: 58px; }
.rest { flex: 1; border-top: 1px solid #217346; }
.status { display: flex; flex: none; align-items: center; height: 23px; background: #217346; margin-top: 1px; color: #5d7767; font: 11px "Open Sans", sans-serif; padding-left: 4px; }
.rec { width: 49px; } .status > button { margin-right: 14px; }
.count { width: 106px; padding-left: 26px; }
.views { margin-left: auto; display: flex; height: 100%; gap: 10px; margin-right: 19px; }
.views button { width: 23px; display: flex; align-items: center; justify-content: center; }
.views .on { background: #0b4425; }

.taskbar { display: flex; flex: none; height: 40px; background: #1f1f1e; color: #fff; }
.taskbar button { display: flex; align-items: center; justify-content: center; height: 40px; flex: none; }
.start { width: 48px; }
.search { width: 288px; background: #f2f2f2; border: 1px solid #c8c8c8; display: flex; align-items: center; gap: 12px; padding-left: 11px; }
.search input { flex: 1; min-width: 0; font-size: 14px; outline: 0; }
.search input::placeholder { color: #2b2b2b; opacity: 1; }
.tb { width: 49px; }
.tb.run { background: linear-gradient(#76b9ed, #76b9ed) center bottom / 40px 2px no-repeat; }
.tb.run.act { background-color: #4b4b4a; background-size: 100% 2px; }
.tray { margin-left: auto; display: flex; align-items: center; border-right: 1px solid #6a6a6a; margin-right: 3px; }
.news { gap: 7px; font: 14px "DejaVu Sans", sans-serif; margin-right: 18px; }
.ti { width: 24px; }
.lang { width: 38px; padding-right: 4px; font-size: 12px; }
.taskbar .clock { display: block; width: 58px; text-align: center; font-size: 11px; line-height: 18px; }
.note { width: 52px; }
.note text { font: 700 12px "Open Sans", sans-serif; fill: #fff; }

.watermark { position: absolute; left: 702px; top: 792px; opacity: .45; pointer-events: none; }
.watermark text { font: 700 31px "Liberation Sans", sans-serif; }
```
